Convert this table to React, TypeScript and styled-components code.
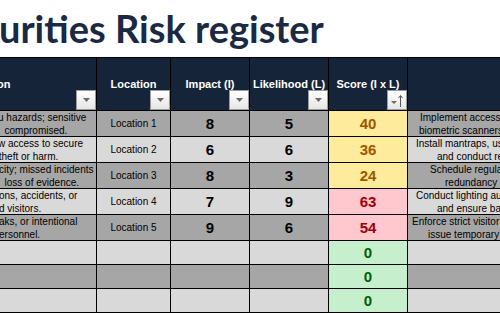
import React from "react";
import styled, { createGlobalStyle } from "styled-components";

const Global = createGlobalStyle`
  html, body { margin: 0; padding: 0; background: #ffffff; overflow: hidden; }
  #root { width: 500px; height: 313px; overflow: hidden; }
`;

type Tone = "dark" | "light" | "warn" | "bad" | "good";

const toneBg: Record<Tone, string> = {
  dark: "#a6a6a6",
  light: "#d9d9d9",
  warn: "#ffeb9c",
  bad: "#ffc7ce",
  good: "#c6efce",
};

const toneInk: Record<Tone, string> = {
  dark: "#000000",
  light: "#000000",
  warn: "#9c5700",
  bad: "#9c0006",
  good: "#006100",
};

const Page = styled.div`
  width: 500px;
  height: 313px;
  overflow: hidden;
  background: #ffffff;
  font-family: "Liberation Sans", Arial, sans-serif;
`;

const TitleBar = styled.div`
  box-sizing: border-box;
  height: 57px;
  padding-top: 5px;
  font-family: Lato, "Open Sans", sans-serif;
  font-weight: 700;
  font-size: 38px;
  color: #1b2a44;
  white-space: nowrap;
  overflow: hidden;
`;

const TitleText = styled.div`
  margin-left: -1px;
`;

/* Text that lies before the visible edge of the scrolled sheet. */
const Lead = styled.span`
  display: inline-flex;
  width: 0;
  justify-content: flex-end;
  white-space: nowrap;
`;

const Sheet = styled.div`
  display: grid;
  grid-template-columns: 97px 74px 79px 79px 79px 320px;
  grid-template-rows: 53px repeat(5, 26px) repeat(3, 24px);
  border-top: 1px solid #000;
  width: max-content;
`;

const Cell = styled.div<{ $tone: Tone }>`
  box-sizing: border-box;
  border-right: 1px solid #000;
  border-bottom: 1px solid #000;
  overflow: hidden;
  display: flex;
  align-items: center;
  justify-content: center;
  background: ${(p) => toneBg[p.$tone]};
  color: ${(p) => toneInk[p.$tone]};
`;

const HeadCell = styled.div<{ $align?: "start" | "center" }>`
  position: relative;
  box-sizing: border-box;
  border-right: 1px solid #000;
  border-bottom: 1px solid #000;
  background: #16243a;
  color: #ffffff;
  font-weight: 700;
  font-size: 11px;
  display: flex;
  align-items: center;
  justify-content: ${(p) => (p.$align === "start" ? "flex-start" : "center")};
  white-space: nowrap;
  overflow: hidden;
`;

const HeadLabel = styled.span<{ $x?: number }>`
  margin-left: ${(p) => p.$x ?? 0}px;
`;

const FilterBtn = styled.div`
  position: absolute;
  right: 0;
  bottom: 0;
  width: 20px;
  height: 20px;
  box-sizing: border-box;
  border: 1px solid #9b9b9b;
  background: linear-gradient(#ffffff, #e6e6e6);
  display: flex;
  align-items: center;
  justify-content: center;
`;

const TextCell = styled(Cell)`
  flex-direction: column;
  align-items: flex-start;
  justify-content: center;
  font-size: 10px;
  line-height: 13px;
  padding-top: 1px;
`;

const Line = styled.div<{ $x: number }>`
  margin-left: ${(p) => p.$x}px;
  white-space: nowrap;
`;

const LocCell = styled(Cell)`
  font-size: 10px;
`;

const NumCell = styled(Cell)`
  font-size: 15px;
  font-weight: 700;
`;

const Triangle = () => (
  <svg width="7" height="4" viewBox="0 0 7 4">
    <path d="M0 0H7L3.5 4Z" fill="#6b6b6b" />
  </svg>
);

const SortedIcon = () => (
  <svg width="18" height="18" viewBox="0 0 18 18">
    <path d="M3 10H9L6 13Z" fill="#6b6b6b" />
    <path d="M12.5 16V5" stroke="#555" strokeWidth="1" />
    <path d="M10.5 7L12.5 4.5L14.5 7" stroke="#555" strokeWidth="1" fill="none" />
  </svg>
);

type Row = {
  desc: [string, string, number][];
  loc: string;
  impact: number;
  like: number;
  mit: [string, number][];
};

const NB = "\u00a0";

const rows: Row[] = [
  {
    desc: [
      ["Unauthorized entry may expose staff and yo", "u hazards; sensitive", -2],
      ["data and assets may be", `${NB}${NB}compromised.`, -1],
    ],
    loc: "Location 1",
    impact: 8,
    like: 5,
    mit: [
      ["Implement access control systems with", 12],
      ["biometric scanners and keycards.", 11],
    ],
  },
  {
    desc: [
      ["Weak locks and tailgating may allo", "w access to secure", -2],
      ["areas, risking", " theft or harm.", -4],
    ],
    loc: "Location 2",
    impact: 6,
    like: 6,
    mit: [
      ["Install mantraps, use security guards,", 8],
      ["and conduct regular drills.", 29],
    ],
  },
  {
    desc: [
      ["Cameras lack coverage or capa", "city; missed incidents", -1],
      ["and", `${NB}${NB}loss of evidence.`, -1],
    ],
    loc: "Location 3",
    impact: 8,
    like: 3,
    mit: [
      ["Schedule regular maintenance checks", 22],
      ["redundancy systems.", 37],
    ],
  },
  {
    desc: [
      ["Poor lighting may cause collisi", "ons, accidents, or", -1],
      ["injuries to staff an", "d visitors.", -1],
    ],
    loc: "Location 4",
    impact: 7,
    like: 9,
    mit: [
      ["Conduct lighting audits, install signage,", 8],
      ["and ensure backup power.", 29],
    ],
  },
  {
    desc: [
      ["Unescorted guests, data le", "aks, or intentional", -1],
      ["harm to p", "ersonnel.", -1],
    ],
    loc: "Location 5",
    impact: 9,
    like: 6,
    mit: [
      ["Enforce strict visitor check-in and", 4],
      ["issue temporary badges.", 20],
    ],
  },
];

const scoreTone = (s: number): Tone => (s >= 50 ? "bad" : s >= 20 ? "warn" : "good");

export default function App() {
  return (
    <Page>
      <Global />
      <TitleBar>
        <TitleText>
          <Lead>Physical Sec</Lead>urities Risk register
        </TitleText>
      </TitleBar>
      <Sheet>
        <HeadCell $align="start">
          <HeadLabel $x={-3}>
            <Lead>Descripti</Lead>on
          </HeadLabel>
          <FilterBtn>
            <Triangle />
          </FilterBtn>
        </HeadCell>
        <HeadCell>
          Location
          <FilterBtn>
            <Triangle />
          </FilterBtn>
        </HeadCell>
        <HeadCell>
          Impact (I)
          <FilterBtn>
            <Triangle />
          </FilterBtn>
        </HeadCell>
        <HeadCell>
          Likelihood (L)
          <FilterBtn>
            <Triangle />
          </FilterBtn>
        </HeadCell>
        <HeadCell>
          Score (I x L)
          <FilterBtn>
            <SortedIcon />
          </FilterBtn>
        </HeadCell>
        <HeadCell>Mitigation Measures</HeadCell>

        {rows.map((r, i) => {
          const tone: Tone = i % 2 === 0 ? "dark" : "light";
          const score = r.impact * r.like;
          return (
            <React.Fragment key={i}>
              <TextCell $tone={tone}>
                {r.desc.map(([lead, text, x], j) => (
                  <Line key={j} $x={x}>
                    <Lead>{lead}</Lead>
                    {text}
                  </Line>
                ))}
              </TextCell>
              <LocCell $tone={tone}>{r.loc}</LocCell>
              <NumCell $tone={tone}>{r.impact}</NumCell>
              <NumCell $tone={tone}>{r.like}</NumCell>
              <NumCell $tone={scoreTone(score)}>{score}</NumCell>
              <TextCell $tone={tone}>
                {r.mit.map(([text, x], j) => (
                  <Line key={j} $x={x}>
                    {text}
                  </Line>
                ))}
              </TextCell>
            </React.Fragment>
          );
        })}

        {[5, 6, 7].map((i) => {
          const tone: Tone = i % 2 === 0 ? "dark" : "light";
          return (
            <React.Fragment key={i}>
              <Cell $tone={tone} />
              <Cell $tone={tone} />
              <Cell $tone={tone} />
              <Cell $tone={tone} />
              <NumCell $tone="good">0</NumCell>
              <Cell $tone={tone} />
            </React.Fragment>
          );
        })}
      </Sheet>
    </Page>
  );
}
